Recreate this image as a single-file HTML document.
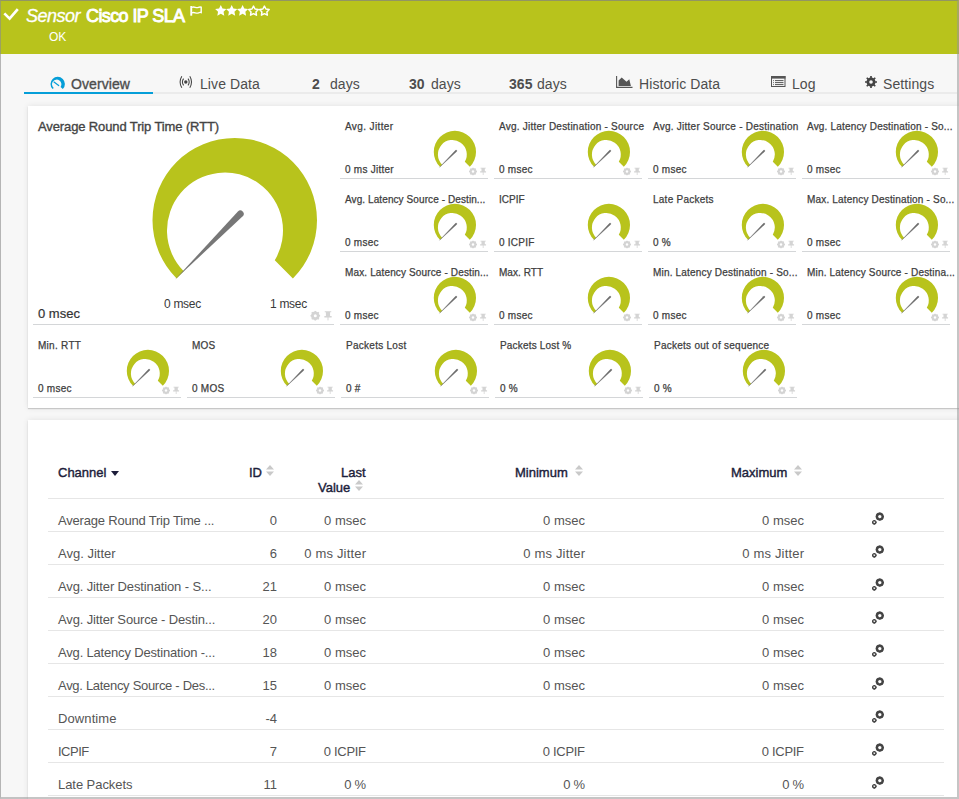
<!DOCTYPE html>
<html><head><meta charset="utf-8"><style>
*{box-sizing:border-box}
html,body{margin:0;padding:0;width:959px;height:799px;overflow:hidden;background:#f7f7f7;font-family:"Liberation Sans",sans-serif}
.frame{position:absolute;left:0;top:0;width:959px;height:799px;border-top:1px solid rgba(130,130,130,.7);border-left:1px solid rgba(140,140,140,.62);border-right:2px solid rgba(150,150,150,.55);border-bottom:2px solid rgba(150,150,150,.55);z-index:50;pointer-events:none}
.hdr{position:absolute;left:0;top:0;width:959px;height:54px;background:#b8c31c}
.abs{position:absolute;white-space:nowrap}
.tabs .tx{position:absolute;top:76px;font-size:14px;color:#4d4d4d;white-space:nowrap;line-height:16px;letter-spacing:.08px}
.panel{position:absolute;left:28px;width:935px;background:#fff;box-shadow:0 1px 1px rgba(0,0,0,.16),0 0 6px rgba(0,0,0,.09)}
.it{position:absolute;height:67px;border-bottom:1px solid #d4d6d8}
.it .t{position:absolute;left:5px;top:9px;font-size:10px;color:#404040;-webkit-text-stroke:.25px #404040;white-space:nowrap;letter-spacing:.18px;line-height:12px}
.it .v{position:absolute;left:5px;top:52px;font-size:10px;color:#404040;-webkit-text-stroke:.25px #404040;white-space:nowrap;letter-spacing:.25px;line-height:12px}
.it svg.g{position:absolute;left:0;top:0}
.big .bt{position:absolute;left:5px;top:7px;font-size:13px;color:#444;-webkit-text-stroke:.35px #444;white-space:nowrap;letter-spacing:-.12px;line-height:15px}
.big .bv{position:absolute;left:5px;top:194px;font-size:13px;color:#333;-webkit-text-stroke:.2px #333;white-space:nowrap;line-height:15px}
.big .lab{position:absolute;font-size:12px;color:#3a3a3a;letter-spacing:-.3px;white-space:nowrap;line-height:14px}
.th{position:absolute;font-size:13px;color:#1c1d3a;-webkit-text-stroke:.4px #1c1d3a;white-space:nowrap;line-height:15px}
.tr{position:absolute;left:48px;width:896px;height:33px;border-bottom:1px solid #e6e6e6;font-size:13px;color:#555;line-height:15px}
.tr span{position:absolute;top:14px;white-space:nowrap}
.tr .c0{left:10px}
.tr .c1{right:667px}
.tr .c2{right:578px}
.tr .c3{right:359px}
.tr .c4{right:140px}
.tr .cog{position:absolute;left:822px;top:13px}
.sa{position:absolute}
</style></head><body>
<svg width="0" height="0" style="position:absolute">
<defs>
<symbol id="gear" viewBox="0 0 10 10"><circle cx="5" cy="5" r="3.1" fill="none" stroke="#d4d4d4" stroke-width="2.3"/><path d="M5,0V10M0,5H10M1.5,1.5L8.5,8.5M8.5,1.5L1.5,8.5" stroke="#d4d4d4" stroke-width="1.6"/><circle cx="5" cy="5" r="1.5" fill="#fff"/></symbol>
<symbol id="pin" viewBox="0 0 8 10"><path d="M0.5,0H7.5V1.2H6.2V5H8V6.6H4.5V9.8H3.5V6.6H0V5H1.8V1.2H0.5Z" fill="#d4d4d4"/></symbol>
<g id="cogs"><circle cx="9.8" cy="4.6" r="3" fill="none" stroke="#444" stroke-width="2.2"/><path d="M9.8,0.6V8.6M5.8,4.6H13.8M7,1.8L12.6,7.4M12.6,1.8L7,7.4" stroke="#444" stroke-width="1.2"/><circle cx="9.8" cy="4.6" r="1.6" fill="#fff"/>
<circle cx="4.3" cy="10.3" r="1.7" fill="none" stroke="#444" stroke-width="1.3"/><path d="M4.3,8V12.6M2,10.3H6.6" stroke="#444" stroke-width="1"/><circle cx="4.3" cy="10.3" r=".8" fill="#fff"/></g>
</defs></svg>

<div class="hdr"></div>
<svg class="abs" style="left:3px;top:7px" width="17" height="15" viewBox="0 0 17 15"><path d="M1.3,6.4 L6.6,11.6 L14.8,2.1" fill="none" stroke="#fff" stroke-width="2.7"/></svg>
<div class="abs" style="left:26px;top:6px;font-size:18px;font-style:italic;color:#fff;line-height:21px;letter-spacing:-.5px;-webkit-text-stroke:.3px #fff">Sensor</div>
<div class="abs" style="left:86px;top:6px;font-size:18px;color:#fff;line-height:21px;letter-spacing:-.6px;-webkit-text-stroke:.9px #fff">Cisco IP SLA</div>
<svg class="abs" style="left:190px;top:6px" width="13" height="11" viewBox="0 0 13 11"><rect x="0.3" y="0" width="1.9" height="9.7" fill="#fff"/><path d="M2,1.3 C4.5,0 6,2.6 8.5,1.3 C9.6,0.8 10.6,0.9 11.2,1.2 V6.6 C10.4,6.3 9.4,6.3 8.5,6.8 C6,8.1 4.5,5.5 2,6.8" fill="none" stroke="#fff" stroke-width="1.4"/></svg>
<div class="abs" style="left:49px;top:30px;font-size:12px;color:#fff;line-height:14px">OK</div>
<svg class="abs" style="left:215px;top:5px" width="57" height="13" viewBox="0 0 57 13"><path d="M5.80,0.00 L7.50,3.55 L11.41,4.08 L8.56,6.80 L9.27,10.67 L5.80,8.80 L2.33,10.67 L3.04,6.80 L0.19,4.08 L4.10,3.55Z" fill="#fff"/><path d="M16.70,0.00 L18.40,3.55 L22.31,4.08 L19.46,6.80 L20.17,10.67 L16.70,8.80 L13.23,10.67 L13.94,6.80 L11.09,4.08 L15.00,3.55Z" fill="#fff"/><path d="M27.60,0.00 L29.30,3.55 L33.21,4.08 L30.36,6.80 L31.07,10.67 L27.60,8.80 L24.13,10.67 L24.84,6.80 L21.99,4.08 L25.90,3.55Z" fill="#fff"/><path d="M38.50,1.10 L40.03,4.00 L43.26,4.55 L40.97,6.90 L41.44,10.15 L38.50,8.70 L35.56,10.15 L36.03,6.90 L33.74,4.55 L36.97,4.00Z" fill="none" stroke="#fff" stroke-width="1.5" stroke-linejoin="round"/><path d="M49.40,1.10 L50.93,4.00 L54.16,4.55 L51.87,6.90 L52.34,10.15 L49.40,8.70 L46.46,10.15 L46.93,6.90 L44.64,4.55 L47.87,4.00Z" fill="none" stroke="#fff" stroke-width="1.5" stroke-linejoin="round"/></svg>

<div class="tabs">
<svg class="abs" style="left:48px;top:74px" width="20" height="16" viewBox="0 0 20 16"><path d="M4.61,15.09 A7.20,7.20 0 1 1 14.79,15.09 L12.61,12.91 A4.70,4.70 0 1 0 5.75,13.95 Z" fill="#059ed8"/><path d="M6,8 L10.7,11.6" stroke="#059ed8" stroke-width="1.2" stroke-linecap="round"/></svg>
<div class="tx" style="left:71px;-webkit-text-stroke:.35px #4d4d4d">Overview</div>
<svg class="abs" style="left:179px;top:76px" width="14" height="12" viewBox="0 0 14 12"><circle cx="6.8" cy="6" r="1.7" fill="#444"/><path d="M4.6,2.6 Q2.2,6 4.6,9.4 M9,2.6 Q11.4,6 9,9.4 M2.8,0.3 Q-0.6,6 2.8,11.7 M10.8,0.3 Q14.2,6 10.8,11.7" fill="none" stroke="#444" stroke-width="1.05"/></svg>
<div class="tx" style="left:200px">Live Data</div>
<div class="tx" style="left:312px;font-weight:bold">2</div><div class="tx" style="left:330px">days</div>
<div class="tx" style="left:409px;font-weight:bold">30</div><div class="tx" style="left:431px">days</div>
<div class="tx" style="left:509px;font-weight:bold">365</div><div class="tx" style="left:537px">days</div>
<svg class="abs" style="left:616px;top:76px" width="17" height="13" viewBox="0 0 17 13"><path d="M0.6,0 V11.4 H16.5" fill="none" stroke="#555" stroke-width="1.1"/><path d="M2.6,10 V4.6 L5.7,1.5 L10.5,5.8 L13.3,3.2 L14.9,10 Z" fill="#555"/></svg>
<div class="tx" style="left:639px">Historic Data</div>
<svg class="abs" style="left:771px;top:76px" width="15" height="11" viewBox="0 0 15 11"><rect x="0.5" y="0.5" width="13.5" height="10" fill="none" stroke="#555" stroke-width="1"/><rect x="0" y="0" width="14.5" height="2.6" fill="#555"/><path d="M4,4.6H12.5M4,6.6H12.5M4,8.6H12.5" stroke="#555" stroke-width="1"/><path d="M2,4.6H3M2,6.6H3M2,8.6H3" stroke="#777" stroke-width="1"/></svg>
<div class="tx" style="left:792px">Log</div>
<svg class="abs" style="left:865px;top:76px" width="12" height="12" viewBox="0 0 12 12"><circle cx="6" cy="6" r="3.3" fill="none" stroke="#444" stroke-width="2.4"/><path d="M6,0V12M0,6H12M1.75,1.75L10.25,10.25M10.25,1.75L1.75,10.25" stroke="#444" stroke-width="1.7"/><circle cx="6" cy="6" r="1.8" fill="#f7f7f7"/></svg>
<div class="tx" style="left:883px">Settings</div>
</div>
<div class="abs" style="left:153px;top:92px;width:804px;height:2px;background:#ebebeb"></div>
<div class="abs" style="left:24px;top:92px;width:129px;height:2px;background:#059ed8"></div>

<div class="panel" style="top:106px;height:302px"></div>
<div class="it big" style="left:33px;top:112px;width:301px;height:213px">
<div class="bt">Average Round Trip Time (RTT)</div><div class="bv">0 msec</div>
<div class="lab" style="left:131px;top:185px">0 msec</div><div class="lab" style="left:237px;top:185px">1 msec</div>
<svg class="g" width="301" height="213" viewBox="0 0 301 213"><path d="M143.59,166.41 A82.25,82.25 0 1 1 259.91,166.41 L241.77,148.27 A58.00,58.00 0 1 0 150.74,159.26 Z" fill="#b8c31c"/><path d="M141.80,167.80 L204.89,99.50 A3.4,3.4 0 0 1 209.71,104.30 Z" fill="#777"/>
<use href="#gear" x="277.3" y="198.8" width="10" height="10"/><use href="#pin" x="291.2" y="199" width="7.6" height="9.8"/></svg>
</div>
<div class="it" style="left:340px;top:112px;width:148px">
<div class="t" style="letter-spacing:0.380px">Avg. Jitter</div><div class="v">0 ms Jitter</div>
<svg class="g" width="148" height="67" viewBox="0 0 148 67"><path d="M99.98,54.82 A21.10,21.10 0 1 1 129.82,54.82 L124.79,49.79 A14.45,14.45 0 1 0 102.13,52.67 Z" fill="#b8c31c"/>
<path d="M99.58,55.22 L115.54,38.33 A0.8,0.8 0 0 1 116.66,39.47 Z" fill="#6e6e6e" stroke="#6e6e6e" stroke-width=".35"/>
<use href="#gear" x="129" y="55.5" width="8" height="8"/><use href="#pin" x="140" y="55.5" width="6.3" height="7.6"/></svg>
</div><div class="it" style="left:494px;top:112px;width:148px">
<div class="t" style="letter-spacing:0.235px">Avg. Jitter Destination - Source</div><div class="v">0 msec</div>
<svg class="g" width="148" height="67" viewBox="0 0 148 67"><path d="M99.98,54.82 A21.10,21.10 0 1 1 129.82,54.82 L124.79,49.79 A14.45,14.45 0 1 0 102.13,52.67 Z" fill="#b8c31c"/>
<path d="M99.58,55.22 L115.54,38.33 A0.8,0.8 0 0 1 116.66,39.47 Z" fill="#6e6e6e" stroke="#6e6e6e" stroke-width=".35"/>
<use href="#gear" x="129" y="55.5" width="8" height="8"/><use href="#pin" x="140" y="55.5" width="6.3" height="7.6"/></svg>
</div><div class="it" style="left:648px;top:112px;width:148px">
<div class="t" style="letter-spacing:0.245px">Avg. Jitter Source - Destination</div><div class="v">0 msec</div>
<svg class="g" width="148" height="67" viewBox="0 0 148 67"><path d="M99.98,54.82 A21.10,21.10 0 1 1 129.82,54.82 L124.79,49.79 A14.45,14.45 0 1 0 102.13,52.67 Z" fill="#b8c31c"/>
<path d="M99.58,55.22 L115.54,38.33 A0.8,0.8 0 0 1 116.66,39.47 Z" fill="#6e6e6e" stroke="#6e6e6e" stroke-width=".35"/>
<use href="#gear" x="129" y="55.5" width="8" height="8"/><use href="#pin" x="140" y="55.5" width="6.3" height="7.6"/></svg>
</div><div class="it" style="left:802px;top:112px;width:148px">
<div class="t" style="letter-spacing:0.180px">Avg. Latency Destination - So...</div><div class="v">0 msec</div>
<svg class="g" width="148" height="67" viewBox="0 0 148 67"><path d="M99.98,54.82 A21.10,21.10 0 1 1 129.82,54.82 L124.79,49.79 A14.45,14.45 0 1 0 102.13,52.67 Z" fill="#b8c31c"/>
<path d="M99.58,55.22 L115.54,38.33 A0.8,0.8 0 0 1 116.66,39.47 Z" fill="#6e6e6e" stroke="#6e6e6e" stroke-width=".35"/>
<use href="#gear" x="129" y="55.5" width="8" height="8"/><use href="#pin" x="140" y="55.5" width="6.3" height="7.6"/></svg>
</div><div class="it" style="left:340px;top:185px;width:148px">
<div class="t" style="letter-spacing:0.090px">Avg. Latency Source - Destin...</div><div class="v">0 msec</div>
<svg class="g" width="148" height="67" viewBox="0 0 148 67"><path d="M99.98,54.82 A21.10,21.10 0 1 1 129.82,54.82 L124.79,49.79 A14.45,14.45 0 1 0 102.13,52.67 Z" fill="#b8c31c"/>
<path d="M99.58,55.22 L115.54,38.33 A0.8,0.8 0 0 1 116.66,39.47 Z" fill="#6e6e6e" stroke="#6e6e6e" stroke-width=".35"/>
<use href="#gear" x="129" y="55.5" width="8" height="8"/><use href="#pin" x="140" y="55.5" width="6.3" height="7.6"/></svg>
</div><div class="it" style="left:494px;top:185px;width:148px">
<div class="t" style="letter-spacing:0.010px">ICPIF</div><div class="v">0 ICPIF</div>
<svg class="g" width="148" height="67" viewBox="0 0 148 67"><path d="M99.98,54.82 A21.10,21.10 0 1 1 129.82,54.82 L124.79,49.79 A14.45,14.45 0 1 0 102.13,52.67 Z" fill="#b8c31c"/>
<path d="M99.58,55.22 L115.54,38.33 A0.8,0.8 0 0 1 116.66,39.47 Z" fill="#6e6e6e" stroke="#6e6e6e" stroke-width=".35"/>
<use href="#gear" x="129" y="55.5" width="8" height="8"/><use href="#pin" x="140" y="55.5" width="6.3" height="7.6"/></svg>
</div><div class="it" style="left:648px;top:185px;width:148px">
<div class="t" style="letter-spacing:0.244px">Late Packets</div><div class="v">0 %</div>
<svg class="g" width="148" height="67" viewBox="0 0 148 67"><path d="M99.98,54.82 A21.10,21.10 0 1 1 129.82,54.82 L124.79,49.79 A14.45,14.45 0 1 0 102.13,52.67 Z" fill="#b8c31c"/>
<path d="M99.58,55.22 L115.54,38.33 A0.8,0.8 0 0 1 116.66,39.47 Z" fill="#6e6e6e" stroke="#6e6e6e" stroke-width=".35"/>
<use href="#gear" x="129" y="55.5" width="8" height="8"/><use href="#pin" x="140" y="55.5" width="6.3" height="7.6"/></svg>
</div><div class="it" style="left:802px;top:185px;width:148px">
<div class="t" style="letter-spacing:0.180px">Max. Latency Destination - So...</div><div class="v">0 msec</div>
<svg class="g" width="148" height="67" viewBox="0 0 148 67"><path d="M99.98,54.82 A21.10,21.10 0 1 1 129.82,54.82 L124.79,49.79 A14.45,14.45 0 1 0 102.13,52.67 Z" fill="#b8c31c"/>
<path d="M99.58,55.22 L115.54,38.33 A0.8,0.8 0 0 1 116.66,39.47 Z" fill="#6e6e6e" stroke="#6e6e6e" stroke-width=".35"/>
<use href="#gear" x="129" y="55.5" width="8" height="8"/><use href="#pin" x="140" y="55.5" width="6.3" height="7.6"/></svg>
</div><div class="it" style="left:340px;top:258px;width:148px">
<div class="t" style="letter-spacing:0.137px">Max. Latency Source - Destin...</div><div class="v">0 msec</div>
<svg class="g" width="148" height="67" viewBox="0 0 148 67"><path d="M99.98,54.82 A21.10,21.10 0 1 1 129.82,54.82 L124.79,49.79 A14.45,14.45 0 1 0 102.13,52.67 Z" fill="#b8c31c"/>
<path d="M99.58,55.22 L115.54,38.33 A0.8,0.8 0 0 1 116.66,39.47 Z" fill="#6e6e6e" stroke="#6e6e6e" stroke-width=".35"/>
<use href="#gear" x="129" y="55.5" width="8" height="8"/><use href="#pin" x="140" y="55.5" width="6.3" height="7.6"/></svg>
</div><div class="it" style="left:494px;top:258px;width:148px">
<div class="t" style="letter-spacing:0.040px">Max. RTT</div><div class="v">0 msec</div>
<svg class="g" width="148" height="67" viewBox="0 0 148 67"><path d="M99.98,54.82 A21.10,21.10 0 1 1 129.82,54.82 L124.79,49.79 A14.45,14.45 0 1 0 102.13,52.67 Z" fill="#b8c31c"/>
<path d="M99.58,55.22 L115.54,38.33 A0.8,0.8 0 0 1 116.66,39.47 Z" fill="#6e6e6e" stroke="#6e6e6e" stroke-width=".35"/>
<use href="#gear" x="129" y="55.5" width="8" height="8"/><use href="#pin" x="140" y="55.5" width="6.3" height="7.6"/></svg>
</div><div class="it" style="left:648px;top:258px;width:148px">
<div class="t" style="letter-spacing:0.180px">Min. Latency Destination - So...</div><div class="v">0 msec</div>
<svg class="g" width="148" height="67" viewBox="0 0 148 67"><path d="M99.98,54.82 A21.10,21.10 0 1 1 129.82,54.82 L124.79,49.79 A14.45,14.45 0 1 0 102.13,52.67 Z" fill="#b8c31c"/>
<path d="M99.58,55.22 L115.54,38.33 A0.8,0.8 0 0 1 116.66,39.47 Z" fill="#6e6e6e" stroke="#6e6e6e" stroke-width=".35"/>
<use href="#gear" x="129" y="55.5" width="8" height="8"/><use href="#pin" x="140" y="55.5" width="6.3" height="7.6"/></svg>
</div><div class="it" style="left:802px;top:258px;width:148px">
<div class="t" style="letter-spacing:0.180px">Min. Latency Source - Destina...</div><div class="v">0 msec</div>
<svg class="g" width="148" height="67" viewBox="0 0 148 67"><path d="M99.98,54.82 A21.10,21.10 0 1 1 129.82,54.82 L124.79,49.79 A14.45,14.45 0 1 0 102.13,52.67 Z" fill="#b8c31c"/>
<path d="M99.58,55.22 L115.54,38.33 A0.8,0.8 0 0 1 116.66,39.47 Z" fill="#6e6e6e" stroke="#6e6e6e" stroke-width=".35"/>
<use href="#gear" x="129" y="55.5" width="8" height="8"/><use href="#pin" x="140" y="55.5" width="6.3" height="7.6"/></svg>
</div><div class="it" style="left:33px;top:331px;width:148px">
<div class="t" style="letter-spacing:0.280px">Min. RTT</div><div class="v">0 msec</div>
<svg class="g" width="148" height="67" viewBox="0 0 148 67"><path d="M99.98,54.82 A21.10,21.10 0 1 1 129.82,54.82 L124.79,49.79 A14.45,14.45 0 1 0 102.13,52.67 Z" fill="#b8c31c"/>
<path d="M99.58,55.22 L115.54,38.33 A0.8,0.8 0 0 1 116.66,39.47 Z" fill="#6e6e6e" stroke="#6e6e6e" stroke-width=".35"/>
<use href="#gear" x="129" y="55.5" width="8" height="8"/><use href="#pin" x="140" y="55.5" width="6.3" height="7.6"/></svg>
</div><div class="it" style="left:187px;top:331px;width:148px">
<div class="t" style="letter-spacing:0.180px">MOS</div><div class="v">0 MOS</div>
<svg class="g" width="148" height="67" viewBox="0 0 148 67"><path d="M99.98,54.82 A21.10,21.10 0 1 1 129.82,54.82 L124.79,49.79 A14.45,14.45 0 1 0 102.13,52.67 Z" fill="#b8c31c"/>
<path d="M99.58,55.22 L115.54,38.33 A0.8,0.8 0 0 1 116.66,39.47 Z" fill="#6e6e6e" stroke="#6e6e6e" stroke-width=".35"/>
<use href="#gear" x="129" y="55.5" width="8" height="8"/><use href="#pin" x="140" y="55.5" width="6.3" height="7.6"/></svg>
</div><div class="it" style="left:341px;top:331px;width:148px">
<div class="t" style="letter-spacing:0.270px">Packets Lost</div><div class="v">0 #</div>
<svg class="g" width="148" height="67" viewBox="0 0 148 67"><path d="M99.98,54.82 A21.10,21.10 0 1 1 129.82,54.82 L124.79,49.79 A14.45,14.45 0 1 0 102.13,52.67 Z" fill="#b8c31c"/>
<path d="M99.58,55.22 L115.54,38.33 A0.8,0.8 0 0 1 116.66,39.47 Z" fill="#6e6e6e" stroke="#6e6e6e" stroke-width=".35"/>
<use href="#gear" x="129" y="55.5" width="8" height="8"/><use href="#pin" x="140" y="55.5" width="6.3" height="7.6"/></svg>
</div><div class="it" style="left:495px;top:331px;width:148px">
<div class="t" style="letter-spacing:0.180px">Packets Lost %</div><div class="v">0 %</div>
<svg class="g" width="148" height="67" viewBox="0 0 148 67"><path d="M99.98,54.82 A21.10,21.10 0 1 1 129.82,54.82 L124.79,49.79 A14.45,14.45 0 1 0 102.13,52.67 Z" fill="#b8c31c"/>
<path d="M99.58,55.22 L115.54,38.33 A0.8,0.8 0 0 1 116.66,39.47 Z" fill="#6e6e6e" stroke="#6e6e6e" stroke-width=".35"/>
<use href="#gear" x="129" y="55.5" width="8" height="8"/><use href="#pin" x="140" y="55.5" width="6.3" height="7.6"/></svg>
</div><div class="it" style="left:649px;top:331px;width:148px">
<div class="t" style="letter-spacing:0.257px">Packets out of sequence</div><div class="v">0 %</div>
<svg class="g" width="148" height="67" viewBox="0 0 148 67"><path d="M99.98,54.82 A21.10,21.10 0 1 1 129.82,54.82 L124.79,49.79 A14.45,14.45 0 1 0 102.13,52.67 Z" fill="#b8c31c"/>
<path d="M99.58,55.22 L115.54,38.33 A0.8,0.8 0 0 1 116.66,39.47 Z" fill="#6e6e6e" stroke="#6e6e6e" stroke-width=".35"/>
<use href="#gear" x="129" y="55.5" width="8" height="8"/><use href="#pin" x="140" y="55.5" width="6.3" height="7.6"/></svg>
</div>

<div class="panel" style="top:420px;height:400px"></div>
<div class="th" style="left:58px;top:465px">Channel</div>
<svg class="abs" style="left:111px;top:471px" width="8" height="5" viewBox="0 0 8 5"><path d="M0,0H8L4,5Z" fill="#1c1d3a"/></svg>
<div class="th" style="left:249px;top:465px">ID</div><svg class="sa" style="left:266px;top:465px" width="8" height="11" viewBox="0 0 8 11"><path d="M4,0 L8,4.5 L0,4.5Z M0,6.5 L8,6.5 L4,11Z" fill="#c9c9c9"/></svg>
<div class="th" style="left:341px;top:465px">Last</div>
<div class="th" style="left:318px;top:480px">Value</div><svg class="sa" style="left:355px;top:480px" width="8" height="11" viewBox="0 0 8 11"><path d="M4,0 L8,4.5 L0,4.5Z M0,6.5 L8,6.5 L4,11Z" fill="#c9c9c9"/></svg>
<div class="th" style="left:515px;top:465px">Minimum</div><svg class="sa" style="left:575px;top:465px" width="8" height="11" viewBox="0 0 8 11"><path d="M4,0 L8,4.5 L0,4.5Z M0,6.5 L8,6.5 L4,11Z" fill="#c9c9c9"/></svg>
<div class="th" style="left:731px;top:465px">Maximum</div><svg class="sa" style="left:794px;top:465px" width="8" height="11" viewBox="0 0 8 11"><path d="M4,0 L8,4.5 L0,4.5Z M0,6.5 L8,6.5 L4,11Z" fill="#c9c9c9"/></svg>
<div class="abs" style="left:48px;top:498px;width:896px;height:1px;background:#e6e6e6"></div>
<div class="tr" style="top:499px"><span class="c0" style="letter-spacing:-0.2px">Average Round Trip Time ...</span><span class="c1">0</span><span class="c2">0 msec</span><span class="c3">0 msec</span><span class="c4">0 msec</span><svg class="cog" width="16" height="14" viewBox="0 0 16 14"><use href="#cogs"/></svg></div><div class="tr" style="top:532px"><span class="c0" style="letter-spacing:0px">Avg. Jitter</span><span class="c1">6</span><span class="c2" style="letter-spacing:0.18px;margin-right:-0.18px">0 ms Jitter</span><span class="c3" style="letter-spacing:0.18px;margin-right:-0.18px">0 ms Jitter</span><span class="c4" style="letter-spacing:0.18px;margin-right:-0.18px">0 ms Jitter</span><svg class="cog" width="16" height="14" viewBox="0 0 16 14"><use href="#cogs"/></svg></div><div class="tr" style="top:565px"><span class="c0" style="letter-spacing:-0.13px">Avg. Jitter Destination - S...</span><span class="c1">21</span><span class="c2">0 msec</span><span class="c3">0 msec</span><span class="c4">0 msec</span><svg class="cog" width="16" height="14" viewBox="0 0 16 14"><use href="#cogs"/></svg></div><div class="tr" style="top:598px"><span class="c0" style="letter-spacing:-0.15px">Avg. Jitter Source - Destin...</span><span class="c1">20</span><span class="c2">0 msec</span><span class="c3">0 msec</span><span class="c4">0 msec</span><svg class="cog" width="16" height="14" viewBox="0 0 16 14"><use href="#cogs"/></svg></div><div class="tr" style="top:631px"><span class="c0" style="letter-spacing:-0.18px">Avg. Latency Destination -...</span><span class="c1">18</span><span class="c2">0 msec</span><span class="c3">0 msec</span><span class="c4">0 msec</span><svg class="cog" width="16" height="14" viewBox="0 0 16 14"><use href="#cogs"/></svg></div><div class="tr" style="top:664px"><span class="c0" style="letter-spacing:-0.3px">Avg. Latency Source - Des...</span><span class="c1">15</span><span class="c2">0 msec</span><span class="c3">0 msec</span><span class="c4">0 msec</span><svg class="cog" width="16" height="14" viewBox="0 0 16 14"><use href="#cogs"/></svg></div><div class="tr" style="top:697px"><span class="c0" style="letter-spacing:0.1px">Downtime</span><span class="c1">-4</span><span class="c2"></span><span class="c3"></span><span class="c4"></span><svg class="cog" width="16" height="14" viewBox="0 0 16 14"><use href="#cogs"/></svg></div><div class="tr" style="top:730px"><span class="c0" style="letter-spacing:-0.5px">ICPIF</span><span class="c1">7</span><span class="c2" style="letter-spacing:-0.3px;margin-right:0.3px">0 ICPIF</span><span class="c3" style="letter-spacing:-0.3px;margin-right:0.3px">0 ICPIF</span><span class="c4" style="letter-spacing:-0.3px;margin-right:0.3px">0 ICPIF</span><svg class="cog" width="16" height="14" viewBox="0 0 16 14"><use href="#cogs"/></svg></div><div class="tr" style="top:763px"><span class="c0" style="letter-spacing:-0.06px">Late Packets</span><span class="c1">11</span><span class="c2" style="letter-spacing:-0.3px;margin-right:0.3px">0 %</span><span class="c3" style="letter-spacing:-0.3px;margin-right:0.3px">0 %</span><span class="c4" style="letter-spacing:-0.3px;margin-right:0.3px">0 %</span><svg class="cog" width="16" height="14" viewBox="0 0 16 14"><use href="#cogs"/></svg></div>

<div class="frame"></div>
</body></html>
